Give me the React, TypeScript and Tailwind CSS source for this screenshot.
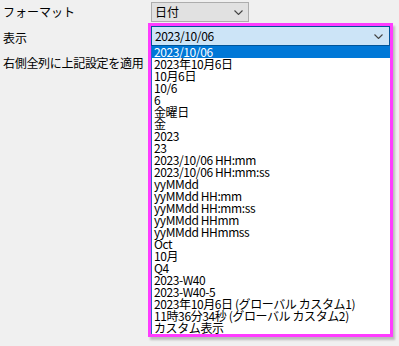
const items = [
  '2023/10/06',
  '2023年10月6日',
  '10月6日',
  '10/6',
  '6',
  '金曜日',
  '金',
  '2023',
  '23',
  '2023/10/06 HH:mm',
  '2023/10/06 HH:mm:ss',
  'yyMMdd',
  'yyMMdd HH:mm',
  'yyMMdd HH:mm:ss',
  'yyMMdd HHmm',
  'yyMMdd HHmmss',
  'Oct',
  '10月',
  'Q4',
  '2023-W40',
  '2023-W40-5',
  '2023年10月6日 (グローバル カスタム1)',
  '11時36分34秒 (グローバル カスタム2)',
  'カスタム表示',
];

function Chevron() {
  return (
    <svg width="9" height="5" viewBox="0 0 9 5" className="shrink-0">
      <path d="M0.5 0.5 L4.5 4.5 L8.5 0.5" fill="none" stroke="#444" strokeWidth="1.1" />
    </svg>
  );
}

export default function App() {
  return (
    <div className="flex h-[346px] w-[399px] bg-[#f0f0f0] text-[12px] leading-[12px] text-black font-['Noto_Sans_CJK_JP','Liberation_Sans',sans-serif]">
      <div className="flex w-[148px] flex-col pl-[3px] pt-[6px]">
        <div className="h-[12px]">フォーマット</div>
        <div className="mt-[14px] h-[12px]">表示</div>
        <div className="mt-[13px] h-[12px] whitespace-nowrap tracking-[-0.3px]">右側全列に上記設定を適用</div>
      </div>

      <div className="flex flex-col pt-[2px]">
        <div className="ml-[3px] flex h-[20px] w-[98px] items-center justify-between border border-[#adadad] bg-[#e1e1e1] pl-[3px] pr-[5px]">
          <span>日付</span>
          <Chevron />
        </div>

        <div className="mt-[1px] flex w-[245px] flex-col border-[3px] border-[#ff3cff] shadow-[2px_3px_2px_rgba(0,0,0,0.22)]">
          <div className="flex h-[20px] items-center justify-between border border-[#005499] bg-[#cce4f7] pl-[3px] pr-[6px] tracking-[-0.4px]">
            <span>2023/10/06</span>
            <Chevron />
          </div>
          <div className="flex flex-col border-l border-[#2a62c9] bg-white">
            {items.map((t, i) => (
              <div
                key={i}
                className={
                  'h-[12px] whitespace-nowrap pl-[2px] leading-[12px] tracking-[-0.4px] ' +
                  (i === 0 ? 'bg-[#0078d7] text-white' : '')
                }
              >
                {t}
              </div>
            ))}
          </div>
        </div>
      </div>
    </div>
  );
}
